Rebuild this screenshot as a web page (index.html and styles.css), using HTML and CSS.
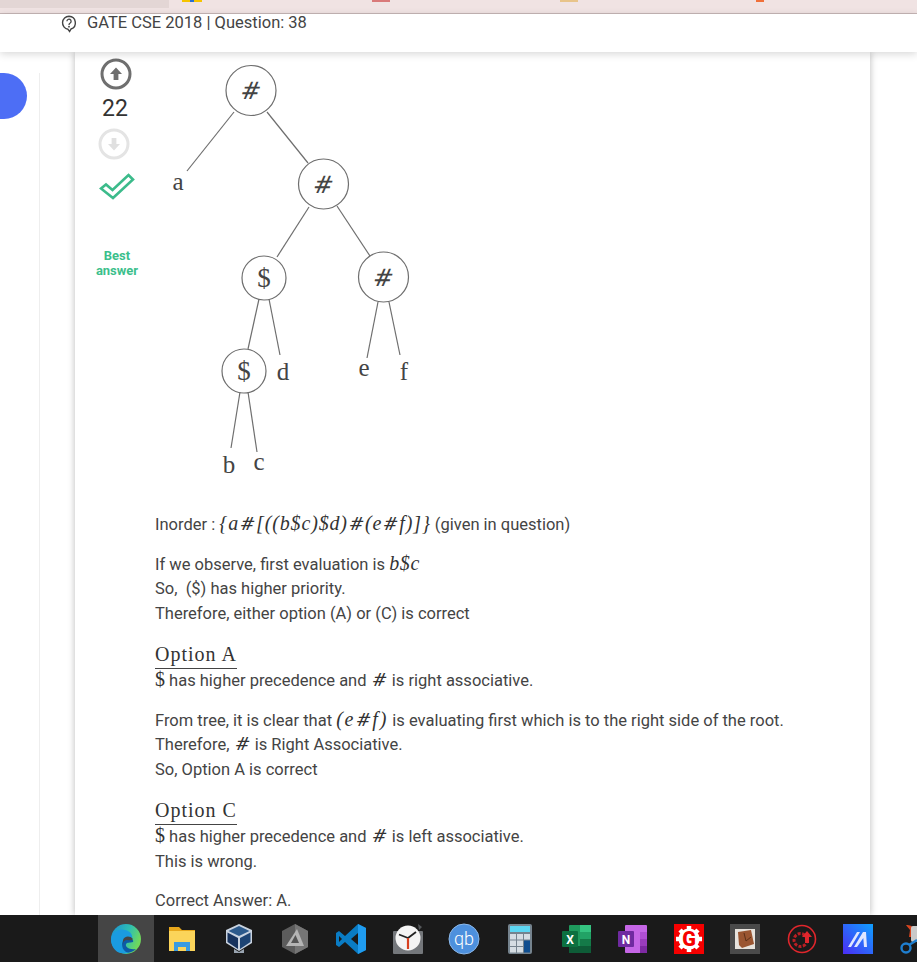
FILE: index.html
```html
<!DOCTYPE html>
<html lang="en">
<head>
  <meta charset="UTF-8">
  <title>GATE CSE 2018 | Question: 38</title>
  <link rel="stylesheet" href="styles.css">
</head>
<body>
  <!-- browser strip, only the bottom edge of the bookmarks shows -->
  <div class="top-strip">
    <div class="tab-edge"></div>
    <span class="fav fav-yellow"></span>
    <span class="fav fav-red"></span>
    <span class="fav fav-tan"></span>
    <span class="fav fav-orange"></span>
  </div>

  <header class="page-header">
    <svg class="q-icon" viewBox="0 0 16 18" width="16" height="18">
      <path d="M8 1.2a6.6 6.6 0 0 0-1 13.1l1.6 2.2 1.4-2.5A6.6 6.6 0 0 0 8 1.2z" fill="none" stroke="#444" stroke-width="1.4"/>
      <path d="M5.9 6.2a2.1 2.1 0 1 1 3.3 1.8c-.8.5-1.2.9-1.2 1.9" fill="none" stroke="#444" stroke-width="1.3"/>
      <circle cx="8" cy="11.7" r=".9" fill="#444"/>
    </svg>
    <span class="page-title">GATE CSE 2018 | Question: 38</span>
  </header>

  <main class="page-main">
    <aside class="side-rail">
      <div class="side-pill"></div>
    </aside>

    <section class="answer-card">
      <div class="vote-col">
        <svg class="vote-up" viewBox="0 0 32 32" width="32" height="32">
          <circle cx="16" cy="16" r="14" fill="#fff" stroke="#6f6f6f" stroke-width="3"/>
          <path d="M16 9.5l6 6.5h-3.6v6h-4.8v-6H10z" fill="#6f6f6f"/>
        </svg>
        <div class="vote-count">22</div>
        <svg class="vote-down" viewBox="0 0 32 32" width="32" height="32">
          <circle cx="16" cy="16" r="14" fill="#fff" stroke="#e4e4e4" stroke-width="3"/>
          <path d="M16 22.5l-6-6.5h3.6v-6h4.8v6H22z" fill="#e0e0e0"/>
        </svg>
        <svg class="best-check" viewBox="0 0 36 30" width="36" height="30">
          <path d="M2 16.5l5-4 6.500 5.500L29.500 3l4.500 4.500L14 26z" fill="#fff" stroke="#3cbb8b" stroke-width="2.600"/>
        </svg>
        <div class="best-label">Best<br>answer</div>
      </div>

      <div class="answer-body">
        <!-- viewBox is in page coordinates so the tree can be read off the screenshot -->
        <svg class="tree" viewBox="155 52 400 461" width="400" height="461">
          <g class="tree-edges">
            <line x1="234" y1="112" x2="187" y2="171"/>
            <line x1="267" y1="112" x2="308" y2="163"/>
            <line x1="309" y1="207" x2="277" y2="257"/>
            <line x1="337" y1="206" x2="370" y2="256"/>
            <line x1="259" y1="299" x2="248" y2="349"/>
            <line x1="269" y1="299" x2="280" y2="355"/>
            <line x1="378" y1="302" x2="367" y2="358"/>
            <line x1="389" y1="302" x2="400" y2="355"/>
            <line x1="240" y1="392" x2="231" y2="448"/>
            <line x1="248" y1="392" x2="257" y2="452"/>
            <circle cx="251" cy="90.500" r="25"/>
            <circle cx="323.500" cy="184" r="25"/>
            <circle cx="264" cy="278" r="22"/>
            <circle cx="383.500" cy="277" r="25"/>
            <circle cx="244" cy="371" r="22"/>
          </g>
          <g class="tree-symbols">
            <text class="tree-hash" x="251" y="99">#</text>
            <text class="tree-hash" x="323.500" y="193">#</text>
            <text x="264" y="287">$</text>
            <text class="tree-hash" x="383.500" y="286">#</text>
            <text x="244" y="380">$</text>
          </g>
          <g class="tree-labels">
            <text x="178" y="190">a</text>
            <text x="283" y="380">d</text>
            <text x="364" y="376">e</text>
            <text x="404" y="380">f</text>
            <text x="229" y="473">b</text>
            <text x="259" y="470">c</text>
          </g>
        </svg>

        <p>Inorder : <span class="math math-wide">{a<i class="hash">#</i>[((b$c)$d)<i class="hash">#</i>(e<i class="hash">#</i>f)]}</span> (given in question)</p>
        <p>If we observe, first evaluation is <span class="math">b$c</span><br>
          So,&nbsp; ($) has higher priority.<br>
          Therefore, either option (A) or (C) is correct</p>
        <p><span class="option-title">Option A</span>
          <span class="math-up">$</span> has higher precedence and <i class="hash">#</i> is right associative.</p>
        <p>From tree, it is clear that <span class="math math-paren">(e<i class="hash">#</i>f)</span> is evaluating first which is to the right side of the root.<br>
          Therefore, <i class="hash">#</i> is Right Associative.<br>
          So, Option A is correct</p>
        <p><span class="option-title">Option C</span>
          <span class="math-up">$</span> has higher precedence and <i class="hash">#</i> is left associative.<br>
          This is wrong.</p>
        <p>Correct Answer: A.</p>
      </div>
    </section>
  </main>

  <footer class="taskbar">
    <div class="task-item is-active">
      <svg viewBox="0 0 32 32" width="32" height="32">
        <defs><linearGradient id="edgeA" x1="0" y1="0" x2="1" y2=".4"><stop offset="0" stop-color="#1a8fd8"/><stop offset=".6" stop-color="#2fc0b0"/><stop offset="1" stop-color="#6fd85c"/></linearGradient></defs>
        <circle cx="16" cy="16" r="15" fill="url(#edgeA)"/>
        <path d="M1 16c1-7 8-11 14-9 6 1 8 6 7 9-1 2-4 2-7 2-3 0-4 2-3 4 1 4 5 6 10 6-3 2-7 3-11 2C5 29 1 23 1 16z" fill="#1a9be0"/>
        <path d="M12 21c0-3 2-5 6-5 4 0 6 1 5 3-3 1-6 0-7 2-1 3 3 6 10 5-3 3-7 4-10 3-3-2-4-5-4-8z" fill="#0d5aa6"/>
        <path d="M13 17c1-4 7-5 10-1-1 2-3 1-6 1-2 0-4 1-4 4z" fill="#454545"/>
      </svg>
    </div>
    <div class="task-item">
      <svg viewBox="0 0 32 32" width="32" height="32">
        <path d="M3 4h10l3 3h13v21H3z" fill="#e8a81c"/>
        <path d="M3 8h26v20H3z" fill="#fbd45a"/>
        <path d="M8 28v-9h16v9h-4v-4h-8v4z" fill="#3a9be0"/>
      </svg>
    </div>
    <div class="task-item">
      <svg viewBox="0 0 32 32" width="32" height="32">
        <path d="M16 1l13 6v13l-13 8-13-8V7z" fill="#c9d3e0"/>
        <path d="M16 3l10.500 5L16 13 5.500 8z" fill="#2c5a8c"/>
        <path d="M4.500 9.500L15 15v11L4.500 19z" fill="#17335e"/>
        <path d="M27.500 9.500L17 15v11l10.500-7z" fill="#1d4474"/>
        <path d="M11 26l5 3 5-3v4H11z" fill="#9aa5b1"/>
      </svg>
    </div>
    <div class="task-item">
      <svg viewBox="0 0 32 32" width="32" height="32">
        <path d="M16 1l13 7v16l-13 7-13-7V8z" fill="#5c5c5c"/>
        <path d="M16 1l13 7v16l-13 7z" fill="#757575"/>
        <path d="M18 6l7 17H7z" fill="#b5b5b5"/>
        <path d="M16.500 12l3.500 8h-8z" fill="#555"/>
      </svg>
    </div>
    <div class="task-item">
      <svg viewBox="0 0 32 32" width="32" height="32">
        <path d="M23 1l8 4v22l-8 4L10 19l-6 5-3-2V10l3-2 6 5z" fill="#0a7cc4"/>
        <path d="M23 1l8 4v22l-8 4z" fill="#1f9cf0"/>
        <path d="M23 10l-7 6 7 6z" fill="#1a1a1a"/>
        <path d="M4 13l3 3-3 3z" fill="#1a1a1a"/>
      </svg>
    </div>
    <div class="task-item">
      <svg viewBox="0 0 32 32" width="32" height="32">
        <path d="M26 1l4 3-3 3z" fill="#55585b"/>
        <rect x="1" y="8" width="30" height="23" rx="1" fill="#74777b"/>
        <circle cx="16" cy="15" r="12.500" fill="#f4f4f4"/>
        <path d="M16 15L7 11.500M16 15l8-6" stroke="#222" stroke-width="1.800" fill="none"/>
        <path d="M16 15v11" stroke="#d8401f" stroke-width="2.200"/>
      </svg>
    </div>
    <div class="task-item">
      <svg viewBox="0 0 32 32" width="32" height="32">
        <circle cx="16" cy="16" r="15" fill="#4d90dd" stroke="#8db9ea" stroke-width="1"/>
        <text x="16" y="21.500" class="qb-text">qb</text>
      </svg>
    </div>
    <div class="task-item">
      <svg viewBox="0 0 32 32" width="32" height="32">
        <rect x="4" y="1" width="24" height="30" rx="2" fill="#75838e"/>
        <rect x="6" y="3" width="20" height="6" fill="#5cd6f2"/>
        <g fill="#d5dde3">
          <rect x="6" y="11" width="6" height="5.500"/><rect x="13" y="11" width="6" height="5.500"/><rect x="20" y="11" width="6" height="5.500"/>
          <rect x="6" y="17.500" width="6" height="5.500"/><rect x="13" y="17.500" width="6" height="5.500"/>
          <rect x="6" y="24" width="6" height="5.500"/><rect x="13" y="24" width="6" height="5.500"/>
        </g>
        <rect x="20" y="17.500" width="6" height="12" fill="#0f4e8f"/>
      </svg>
    </div>
    <div class="task-item">
      <svg viewBox="0 0 32 32" width="32" height="32">
        <rect x="8" y="2" width="22" height="28" rx="1" fill="#1f9a5d"/>
        <rect x="19" y="2" width="11" height="7" fill="#35c481"/>
        <rect x="19" y="9" width="11" height="7" fill="#22a366"/>
        <rect x="19" y="16" width="11" height="7" fill="#147a48"/>
        <rect x="8" y="23" width="22" height="7" fill="#0e5c37"/>
        <rect x="1" y="8" width="16" height="16" rx="1" fill="#0c7040"/>
        <text x="9" y="20.500" class="badge-text">X</text>
      </svg>
    </div>
    <div class="task-item">
      <svg viewBox="0 0 32 32" width="32" height="32">
        <rect x="8" y="2" width="22" height="28" rx="1" fill="#c566e6"/>
        <rect x="23" y="9" width="7" height="7" fill="#b04fd3"/>
        <rect x="23" y="16" width="7" height="7" fill="#9a3cbd"/>
        <rect x="23" y="23" width="7" height="7" fill="#7e2aa3"/>
        <rect x="1" y="8" width="16" height="16" rx="1" fill="#6f2aa0"/>
        <text x="9" y="20.500" class="badge-text">N</text>
      </svg>
    </div>
    <div class="task-item">
      <svg viewBox="0 0 32 32" width="32" height="32">
        <rect x="1" y="1" width="30" height="30" fill="#f60000"/>
        <circle cx="16" cy="16" r="10.500" fill="#fff"/>
        <g stroke="#fff" stroke-width="4.500">
          <path d="M16 3v26M3 16h26M7 7l18 18M25 7L7 25"/>
        </g>
        <text x="16" y="23" class="gear-text">G</text>
      </svg>
    </div>
    <div class="task-item">
      <svg viewBox="0 0 32 32" width="32" height="32">
        <rect x="1" y="1" width="30" height="30" fill="#4a4a4a"/>
        <rect x="6" y="6" width="20" height="20" fill="#e6e2dc"/>
        <path d="M9 9l13-2 3 14-12 4-3-3z" fill="#9a5531"/>
        <path d="M15 10l2 8 5-4" stroke="#5c3018" stroke-width="1" fill="none"/>
      </svg>
    </div>
    <div class="task-item">
      <svg viewBox="0 0 32 32" width="32" height="32">
        <circle cx="16" cy="16" r="13.500" fill="none" stroke="#e0262c" stroke-width="1.600"/>
        <circle cx="14.500" cy="17" r="6.500" fill="none" stroke="#b81f24" stroke-width="3" stroke-dasharray="3 1.500"/>
        <path d="M21 8l5 6h-3v6h-4v-6h-3z" fill="#e0262c"/>
      </svg>
    </div>
    <div class="task-item">
      <svg viewBox="0 0 32 32" width="32" height="32">
        <defs><linearGradient id="maBg" x1="0" y1="1" x2="1" y2="0"><stop offset="0" stop-color="#4b2cf5"/><stop offset="1" stop-color="#0fa0ff"/></linearGradient></defs>
        <rect x="1" y="1" width="30" height="30" fill="url(#maBg)"/>
        <path d="M6 24L15 9h3L9 24zM12 24l9-15h3l1 15h-3l-.7-9L15 24z" fill="#dfe6ff"/>
      </svg>
    </div>
    <div class="task-item">
      <svg viewBox="0 0 32 32" width="32" height="32">
        <path d="M8 2c4 0 7 1 8 4l-2 8h-3l1-7c-1-2-3-3-4-5z" fill="#d8451f"/>
        <rect x="13" y="3" width="14" height="16" rx="2" fill="#c9c9c9"/>
        <circle cx="8" cy="25" r="4.500" fill="none" stroke="#1f7fd0" stroke-width="2.400"/>
        <path d="M11 22l8-5" stroke="#1f7fd0" stroke-width="2.400"/>
      </svg>
    </div>
  </footer>
</body>
</html>
```

FILE: styles.css
```css
* {
  box-sizing: border-box;
}
html, body {
  height: 100%;
}
body {
  margin: 0;
  display: flex;
  flex-direction: column;
  height: 962px;
  overflow: hidden;
  background-color: #fff;
  color: #444;
  font-family: Roboto, "Liberation Sans", sans-serif;
  font-size: 16.5px;
  line-height: 24.5px;
}
.top-strip {
  display: flex;
  flex: none;
  height: 14px;
  background-color: #f0e3e3;
  border-bottom: 1px solid #c6b6b6;
}
.tab-edge {
  width: 169px;
  height: 8px;
  background-color: #e3d6d5;
}
.fav {
  height: 2px;
}
.fav-yellow {
  width: 20px;
  margin-left: 13px;
  background: linear-gradient(90deg, #f5c400 40%, #2a6fd0 40%, #2a6fd0 60%, #f5c400 60%);
}
.fav-red {
  width: 18px;
  margin-left: 170px;
  background-color: #d97a7a;
}
.fav-tan {
  width: 18px;
  margin-left: 170px;
  background-color: #e8c48a;
}
.fav-orange {
  width: 8px;
  margin-left: 178px;
  background-color: #f0703a;
}
.page-header {
  position: relative;
  z-index: 2;
  display: flex;
  align-items: flex-start;
  gap: 10px;
  flex: none;
  height: 38px;
  padding-left: 61px;
  background-color: #fff;
  box-shadow: 0 2px 8px rgba(0, 0, 0, 0.16);
}
.q-icon {
  margin-top: 1px;
}
.page-title {
  line-height: 18px;
}
.page-main {
  display: flex;
  flex: 1;
  min-height: 0;
}
.side-rail {
  flex: none;
  width: 40px;
  margin-top: 21px;
  border-right: 1px solid #eee;
}
.side-pill {
  width: 27px;
  height: 46px;
  background-color: #4d6ef5;
  border-radius: 0 23px 23px 0;
}
.answer-card {
  display: flex;
  flex: none;
  width: 795px;
  margin-left: 35px;
  background-color: #fff;
  box-shadow: 0 0 7px rgba(0, 0, 0, 0.28);
}
.vote-col {
  display: flex;
  flex-direction: column;
  align-items: center;
  flex: none;
  width: 80px;
  padding-top: 6px;
}
.vote-up {
  margin-left: 2px;
}
.vote-count {
  margin-top: 3px;
  color: #333;
  font-size: 23px;
  line-height: 32px;
}
.vote-down {
  margin-top: 3px;
  margin-right: 2px;
}
.best-check {
  margin-top: 12px;
  margin-left: 4px;
}
.best-label {
  margin-top: 46px;
  margin-left: 4px;
  color: #3cbf8c;
  font-size: 13px;
  font-weight: 700;
  line-height: 15px;
  text-align: center;
}
.answer-body {
  flex: 1;
  min-width: 0;
}
.answer-body p {
  margin: 0 0 15px;
}
.tree {
  display: block;
}
.tree-edges line,
.tree-edges circle {
  fill: none;
  stroke: #6e6e6e;
  stroke-width: 1.2;
}
.tree-symbols text {
  fill: #444;
  font-family: "Liberation Serif", serif;
  font-size: 27px;
  text-anchor: middle;
}
.tree-symbols .tree-hash {
  font-family: "DejaVu Serif", serif;
  font-size: 24px;
  font-weight: 300;
  transform: skewX(-10deg);
  transform-box: fill-box;
  transform-origin: center;
}
.tree-labels text {
  fill: #444;
  font-family: "Liberation Serif", serif;
  font-size: 25px;
  text-anchor: middle;
}
.math {
  color: #333;
  font-family: "Liberation Serif", serif;
  font-size: 20px;
  font-style: italic;
  line-height: 1;
  letter-spacing: 0.6px;
}
.math-wide {
  letter-spacing: 0.85px;
}
.math-paren {
  letter-spacing: 1.8px;
}
.math-up {
  color: #333;
  font-family: "Liberation Serif", serif;
  font-size: 20px;
  line-height: 1;
}
.hash {
  display: inline-block;
  margin: 0 1px;
  color: #333;
  font-family: "DejaVu Serif", serif;
  font-size: 18px;
  font-style: normal;
  line-height: 1;
  letter-spacing: 0;
  transform: skewX(-10deg);
}
.option-title {
  display: block;
  width: fit-content;
  border-bottom: 1px solid #444;
  color: #333;
  font-family: "Liberation Serif", serif;
  font-size: 20px;
  letter-spacing: 1px;
  line-height: 27px;
}
.taskbar {
  display: flex;
  flex: none;
  height: 47px;
  padding-left: 98px;
  position: relative;
  z-index: 3;
  background-color: #1a1a1a;
}
.task-item {
  display: flex;
  align-items: center;
  justify-content: center;
  flex: none;
  width: 56.3px;
}
.task-item.is-active {
  background-color: #454545;
}
.qb-text {
  fill: #fff;
  font-family: Roboto, sans-serif;
  font-size: 18px;
  font-weight: 300;
  text-anchor: middle;
}
.badge-text {
  fill: #fff;
  font-family: Roboto, sans-serif;
  font-size: 12px;
  font-weight: 700;
  text-anchor: middle;
}
.gear-text {
  fill: #f60000;
  font-family: Roboto, sans-serif;
  font-size: 20px;
  font-weight: 900;
  text-anchor: middle;
}
```
